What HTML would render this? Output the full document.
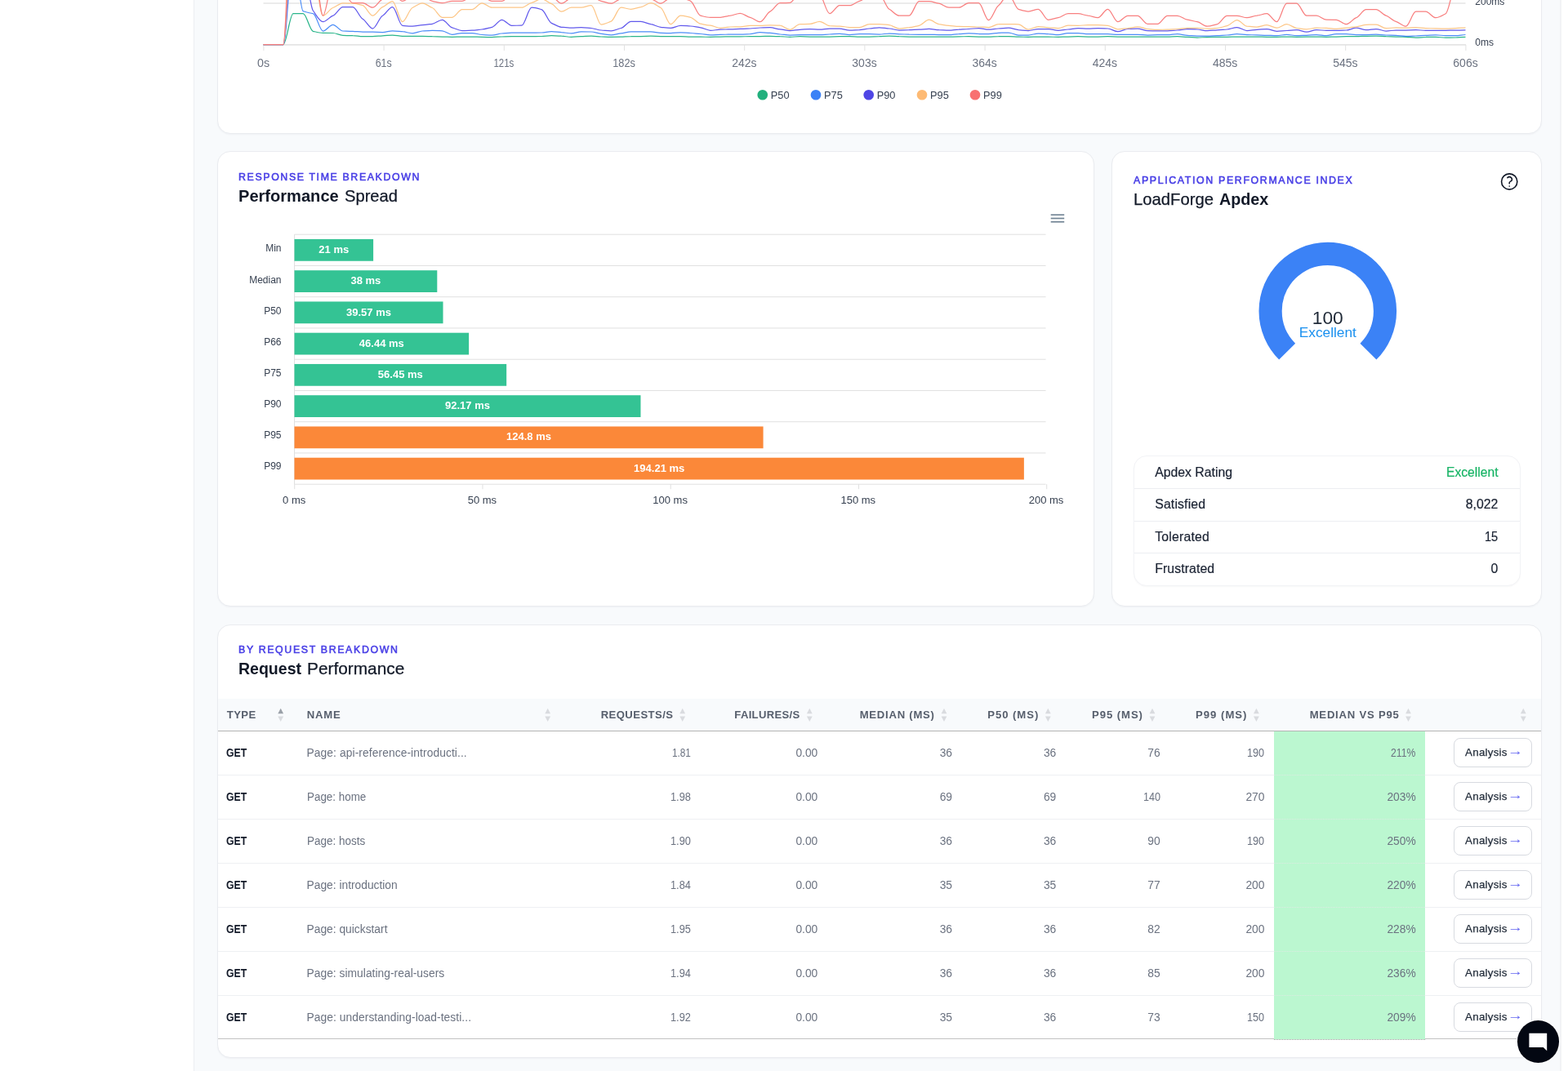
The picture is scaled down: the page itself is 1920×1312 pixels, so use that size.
<!DOCTYPE html>
<html lang="en">
<head>
<meta charset="utf-8">
<title>LoadForge - Run Report</title>
<style>
*{box-sizing:border-box;margin:0;padding:0}
html,body{width:1920px;height:1312px;overflow:hidden;background:#fff}
body{position:relative;font-family:"Liberation Sans",sans-serif;color:#111827}
.abs{position:absolute}
.t{position:absolute;white-space:nowrap;display:block}
.main{position:absolute;left:237px;top:0;width:1675px;height:1312px;background:#f8fafc;border-left:1px solid #eceef2;border-right:2px solid #f2f3f5}
.card{position:absolute;background:#fff;border:1px solid #eaecf0;border-radius:16px;box-shadow:0 1px 2px rgba(16,24,40,.04)}
svg{position:absolute;overflow:visible}
</style>
</head>
<body>
<div id="page" style="position:absolute;left:0;top:0;width:1920px;height:1312px;will-change:transform">
<div class="main"></div>
<div class="card" style="left:266px;top:-40px;width:1622px;height:204px"></div>
<div class="card" style="left:266px;top:185px;width:1074px;height:558px"></div>
<div class="card" style="left:1361px;top:185px;width:527px;height:558px"></div>
<div class="card" style="left:266px;top:765px;width:1622px;height:531px"></div>
<svg style="left:0;top:0" width="1920" height="170" viewBox="0 0 1920 170"><line x1="322.5" y1="3.9" x2="1794.5" y2="3.9" stroke="#e5e5e5" stroke-width="1.5"/><line x1="322" y1="54.9" x2="1795" y2="54.9" stroke="#e5e5e5" stroke-width="1.6"/><line x1="322.90" y1="55" x2="322.90" y2="62" stroke="#e2e2e2" stroke-width="1"/><line x1="470.10" y1="55" x2="470.10" y2="62" stroke="#e2e2e2" stroke-width="1"/><line x1="617.30" y1="55" x2="617.30" y2="62" stroke="#e2e2e2" stroke-width="1"/><line x1="764.50" y1="55" x2="764.50" y2="62" stroke="#e2e2e2" stroke-width="1"/><line x1="911.70" y1="55" x2="911.70" y2="62" stroke="#e2e2e2" stroke-width="1"/><line x1="1058.90" y1="55" x2="1058.90" y2="62" stroke="#e2e2e2" stroke-width="1"/><line x1="1206.10" y1="55" x2="1206.10" y2="62" stroke="#e2e2e2" stroke-width="1"/><line x1="1353.30" y1="55" x2="1353.30" y2="62" stroke="#e2e2e2" stroke-width="1"/><line x1="1500.50" y1="55" x2="1500.50" y2="62" stroke="#e2e2e2" stroke-width="1"/><line x1="1647.70" y1="55" x2="1647.70" y2="62" stroke="#e2e2e2" stroke-width="1"/><line x1="1794.90" y1="55" x2="1794.90" y2="62" stroke="#e2e2e2" stroke-width="1"/><path d="M322.5 54.5C326.6 54.5 330.6 54.5 334.7 54.5C338.7 54.5 342.8 54.5 346.8 54.5C350.9 54.5 354.9 16.7 359.0 16.7C363.1 16.7 367.1 16.7 371.2 16.7C375.2 16.7 379.3 37.4 383.3 38.3C387.4 39.2 391.4 40.3 395.5 40.3C399.5 40.4 403.6 40.4 407.7 40.5C411.7 40.6 415.8 43.2 419.8 43.3C423.9 43.5 427.9 43.6 432.0 43.7C436.0 43.7 440.1 44.7 444.2 44.7C448.2 44.7 452.3 44.7 456.3 44.7C460.4 44.7 464.4 44.0 468.5 43.8C472.5 43.7 476.6 43.0 480.6 43.0C484.7 43.0 488.8 44.3 492.8 44.3C496.9 44.3 500.9 44.3 505.0 44.3C509.0 44.3 513.1 44.3 517.1 44.3C521.2 44.3 525.3 44.6 529.3 44.7C533.4 44.7 537.4 45.0 541.5 45.0C545.5 45.0 549.6 45.3 553.6 45.3C557.7 45.3 561.8 45.0 565.8 45.0C569.9 45.0 573.9 45.0 578.0 45.0C582.0 45.0 586.1 45.3 590.1 45.3C594.2 45.4 598.2 45.5 602.3 45.5C606.4 45.5 610.4 45.1 614.5 45.0C618.5 44.9 622.6 44.7 626.6 44.7C630.7 44.7 634.7 44.7 638.8 44.7C642.9 44.7 646.9 44.7 651.0 44.7C655.0 44.7 659.1 44.6 663.1 44.5C667.2 44.4 671.2 43.7 675.3 43.7C679.3 43.7 683.4 44.0 687.5 44.2C691.5 44.3 695.6 45.3 699.6 45.3C703.7 45.3 707.7 44.8 711.8 44.7C715.8 44.6 719.9 44.2 724.0 44.2C728.0 44.2 732.1 44.9 736.1 45.0C740.2 45.1 744.2 45.3 748.3 45.3C752.3 45.3 756.4 45.2 760.5 45.2C764.5 45.1 768.6 44.7 772.6 44.7C776.7 44.6 780.7 44.5 784.8 44.5C788.8 44.5 792.9 44.2 796.9 44.2C801.0 44.2 805.1 44.5 809.1 44.5C813.2 44.5 817.2 44.5 821.3 44.5C825.3 44.5 829.4 44.5 833.4 44.5C837.5 44.5 841.6 45.0 845.6 45.0C849.7 45.0 853.7 45.1 857.8 45.2C861.8 45.2 865.9 45.3 869.9 45.3C874.0 45.3 878.0 45.0 882.1 45.0C886.2 45.0 890.2 44.8 894.3 44.8C898.3 44.8 902.4 44.8 906.4 44.8C910.5 44.8 914.5 44.7 918.6 44.7C922.7 44.6 926.7 44.5 930.8 44.5C934.8 44.5 938.9 44.3 942.9 44.3C947.0 44.3 951.0 44.6 955.1 44.7C959.2 44.7 963.2 45.3 967.3 45.3C971.3 45.3 975.4 44.7 979.4 44.7C983.5 44.7 987.5 45.0 991.6 45.0C995.6 45.0 999.7 45.2 1003.8 45.2C1007.8 45.2 1011.9 45.0 1015.9 45.0C1020.0 45.0 1024.0 44.7 1028.1 44.7C1032.1 44.7 1036.2 44.7 1040.3 44.7C1044.3 44.7 1048.4 45.2 1052.4 45.2C1056.5 45.2 1060.5 45.0 1064.6 45.0C1068.6 45.0 1072.7 44.7 1076.7 44.7C1080.8 44.6 1084.9 44.2 1088.9 44.2C1093.0 44.2 1097.0 44.6 1101.1 44.7C1105.1 44.7 1109.2 45.0 1113.2 45.0C1117.3 45.0 1121.4 45.0 1125.4 45.0C1129.5 45.0 1133.5 45.2 1137.6 45.2C1141.6 45.2 1145.7 45.0 1149.7 45.0C1153.8 45.0 1157.8 45.0 1161.9 45.0C1166.0 45.0 1170.0 44.9 1174.1 44.8C1178.1 44.8 1182.2 44.7 1186.2 44.7C1190.3 44.7 1194.3 45.0 1198.4 45.0C1202.5 45.0 1206.5 45.2 1210.6 45.2C1214.6 45.2 1218.7 44.7 1222.7 44.7C1226.8 44.6 1230.8 44.5 1234.9 44.5C1239.0 44.5 1243.0 45.1 1247.1 45.2C1251.1 45.2 1255.2 45.3 1259.2 45.3C1263.3 45.3 1267.3 45.0 1271.4 45.0C1275.4 45.0 1279.5 45.1 1283.6 45.2C1287.6 45.2 1291.7 45.3 1295.7 45.3C1299.8 45.3 1303.8 45.0 1307.9 45.0C1311.9 45.0 1316.0 44.7 1320.1 44.7C1324.1 44.7 1328.2 45.0 1332.2 45.0C1336.3 45.0 1340.3 45.0 1344.4 45.0C1348.4 45.0 1352.5 44.7 1356.5 44.7C1360.6 44.7 1364.7 45.0 1368.7 45.0C1372.8 45.0 1376.8 45.2 1380.9 45.2C1384.9 45.2 1389.0 45.0 1393.0 45.0C1397.1 45.0 1401.2 45.2 1405.2 45.2C1409.3 45.2 1413.3 45.2 1417.4 45.2C1421.4 45.2 1425.5 45.2 1429.5 45.2C1433.6 45.2 1437.7 44.7 1441.7 44.7C1445.8 44.7 1449.8 45.2 1453.9 45.3C1457.9 45.4 1462.0 46.0 1466.0 46.0C1470.1 46.0 1474.1 45.5 1478.2 45.5C1482.3 45.5 1486.3 45.3 1490.4 45.3C1494.4 45.3 1498.5 45.3 1502.5 45.3C1506.6 45.3 1510.6 45.0 1514.7 45.0C1518.8 45.0 1522.8 45.0 1526.9 45.0C1530.9 45.0 1535.0 45.0 1539.0 45.0C1543.1 45.0 1547.1 45.3 1551.2 45.3C1555.2 45.3 1559.3 45.3 1563.4 45.3C1567.4 45.3 1571.5 45.0 1575.5 45.0C1579.6 45.0 1583.6 45.3 1587.7 45.3C1591.7 45.3 1595.8 45.2 1599.9 45.2C1603.9 45.1 1608.0 45.0 1612.0 45.0C1616.1 45.0 1620.1 45.3 1624.2 45.3C1628.2 45.3 1632.3 45.0 1636.4 45.0C1640.4 45.0 1644.5 44.7 1648.5 44.7C1652.6 44.7 1656.6 44.7 1660.7 44.7C1664.7 44.7 1668.8 44.4 1672.8 44.3C1676.9 44.3 1681.0 44.2 1685.0 44.2C1689.1 44.2 1693.1 44.6 1697.2 44.7C1701.2 44.7 1705.3 45.0 1709.3 45.0C1713.4 45.0 1717.5 45.2 1721.5 45.3C1725.6 45.4 1729.6 46.2 1733.7 46.2C1737.7 46.2 1741.8 45.6 1745.8 45.5C1749.9 45.4 1753.9 45.3 1758.0 45.3C1762.1 45.3 1766.1 46.2 1770.2 46.2C1774.2 46.2 1778.3 46.1 1782.3 46.0C1786.4 45.9 1790.4 45.4 1794.5 45.3" fill="none" stroke="#2ab58a" stroke-width="1.25" stroke-linejoin="round"/><path d="M322.5 54.5C326.6 54.5 330.6 54.5 334.7 54.5C338.7 54.5 342.8 54.5 346.8 54.5C350.9 54.5 354.9 -55.0 359.0 -55.0C363.1 -55.0 367.1 12.4 371.2 13.7C375.2 14.9 379.3 16.2 383.3 16.7C387.4 17.1 391.4 38.0 395.5 38.0C399.5 38.0 403.6 30.3 407.7 30.3C411.7 30.3 415.8 37.9 419.8 38.0C423.9 38.1 427.9 38.3 432.0 38.3C436.0 38.4 440.1 39.2 444.2 39.2C448.2 39.2 452.3 39.2 456.3 39.2C460.4 39.2 464.4 39.5 468.5 39.5C472.5 39.5 476.6 37.8 480.6 37.8C484.7 37.8 488.8 38.4 492.8 38.7C496.9 38.9 500.9 40.8 505.0 40.8C509.0 40.8 513.1 38.3 517.1 38.0C521.2 37.7 525.3 37.3 529.3 37.3C533.4 37.3 537.4 37.6 541.5 37.8C545.5 38.1 549.6 42.3 553.6 42.3C557.7 42.3 561.8 40.5 565.8 40.5C569.9 40.5 573.9 40.5 578.0 40.5C582.0 40.5 586.1 42.3 590.1 42.5C594.2 42.7 598.2 43.2 602.3 43.2C606.4 43.2 610.4 41.2 614.5 41.0C618.5 40.8 622.6 40.0 626.6 40.0C630.7 40.0 634.7 40.0 638.8 40.0C642.9 40.0 646.9 40.2 651.0 40.2C655.0 40.2 659.1 40.1 663.1 40.0C667.2 39.9 671.2 38.7 675.3 38.7C679.3 38.7 683.4 39.5 687.5 39.7C691.5 39.8 695.6 40.8 699.6 40.8C703.7 40.8 707.7 38.8 711.8 38.8C715.8 38.8 719.9 38.9 724.0 39.0C728.0 39.1 732.1 41.0 736.1 41.3C740.2 41.6 744.2 42.8 748.3 42.8C752.3 42.8 756.4 41.1 760.5 40.8C764.5 40.5 768.6 38.8 772.6 38.8C776.7 38.8 780.7 38.8 784.8 38.8C788.8 38.8 792.9 38.8 796.9 38.8C801.0 38.8 805.1 40.3 809.1 40.3C813.2 40.4 817.2 40.5 821.3 40.5C825.3 40.5 829.4 39.8 833.4 39.8C837.5 39.8 841.6 40.4 845.6 40.5C849.7 40.6 853.7 41.3 857.8 41.5C861.8 41.7 865.9 42.8 869.9 42.8C874.0 42.8 878.0 42.4 882.1 42.3C886.2 42.3 890.2 42.2 894.3 42.2C898.3 42.1 902.4 42.0 906.4 42.0C910.5 42.0 914.5 41.8 918.6 41.7C922.7 41.5 926.7 39.7 930.8 39.7C934.8 39.7 938.9 40.2 942.9 40.3C947.0 40.5 951.0 41.8 955.1 42.0C959.2 42.2 963.2 43.0 967.3 43.0C971.3 43.0 975.4 42.7 979.4 42.7C983.5 42.7 987.5 42.7 991.6 42.7C995.6 42.7 999.7 42.7 1003.8 42.7C1007.8 42.7 1011.9 42.1 1015.9 42.0C1020.0 41.9 1024.0 41.3 1028.1 41.3C1032.1 41.3 1036.2 42.5 1040.3 42.5C1044.3 42.5 1048.4 41.7 1052.4 41.7C1056.5 41.7 1060.5 41.7 1064.6 41.7C1068.6 41.7 1072.7 42.0 1076.7 42.0C1080.8 42.0 1084.9 41.0 1088.9 41.0C1093.0 41.0 1097.0 41.7 1101.1 41.8C1105.1 41.9 1109.2 42.1 1113.2 42.2C1117.3 42.2 1121.4 42.3 1125.4 42.3C1129.5 42.3 1133.5 42.3 1137.6 42.3C1141.6 42.3 1145.7 42.5 1149.7 42.5C1153.8 42.5 1157.8 42.7 1161.9 42.7C1166.0 42.7 1170.0 41.8 1174.1 41.7C1178.1 41.5 1182.2 40.8 1186.2 40.8C1190.3 40.8 1194.3 41.4 1198.4 41.5C1202.5 41.6 1206.5 41.7 1210.6 41.7C1214.6 41.7 1218.7 40.5 1222.7 40.3C1226.8 40.2 1230.8 40.0 1234.9 40.0C1239.0 40.0 1243.0 43.0 1247.1 43.0C1251.1 43.0 1255.2 43.0 1259.2 43.0C1263.3 43.0 1267.3 41.0 1271.4 41.0C1275.4 41.0 1279.5 41.5 1283.6 41.7C1287.6 41.8 1291.7 42.7 1295.7 42.7C1299.8 42.7 1303.8 40.5 1307.9 40.5C1311.9 40.5 1316.0 40.5 1320.1 40.5C1324.1 40.5 1328.2 41.7 1332.2 41.7C1336.3 41.7 1340.3 41.7 1344.4 41.7C1348.4 41.7 1352.5 41.7 1356.5 41.7C1360.6 41.7 1364.7 42.3 1368.7 42.3C1372.8 42.3 1376.8 42.3 1380.9 42.3C1384.9 42.3 1389.0 42.3 1393.0 42.3C1397.1 42.3 1401.2 43.0 1405.2 43.0C1409.3 43.0 1413.3 42.7 1417.4 42.7C1421.4 42.7 1425.5 42.7 1429.5 42.7C1433.6 42.7 1437.7 41.7 1441.7 41.7C1445.8 41.7 1449.8 43.1 1453.9 43.3C1457.9 43.5 1462.0 44.2 1466.0 44.2C1470.1 44.2 1474.1 44.2 1478.2 44.2C1482.3 44.2 1486.3 43.8 1490.4 43.7C1494.4 43.6 1498.5 43.1 1502.5 43.0C1506.6 42.9 1510.6 41.7 1514.7 41.7C1518.8 41.7 1522.8 42.6 1526.9 42.7C1530.9 42.7 1535.0 42.8 1539.0 42.8C1543.1 42.9 1547.1 43.3 1551.2 43.3C1555.2 43.4 1559.3 43.7 1563.4 43.7C1567.4 43.7 1571.5 42.3 1575.5 42.3C1579.6 42.3 1583.6 43.7 1587.7 43.7C1591.7 43.7 1595.8 43.4 1599.9 43.3C1603.9 43.2 1608.0 42.5 1612.0 42.5C1616.1 42.5 1620.1 43.7 1624.2 43.7C1628.2 43.7 1632.3 41.7 1636.4 41.7C1640.4 41.7 1644.5 41.7 1648.5 41.7C1652.6 41.7 1656.6 42.5 1660.7 42.5C1664.7 42.5 1668.8 42.5 1672.8 42.5C1676.9 42.5 1681.0 42.2 1685.0 42.2C1689.1 42.2 1693.1 42.9 1697.2 43.0C1701.2 43.1 1705.3 43.2 1709.3 43.3C1713.4 43.4 1717.5 44.3 1721.5 44.3C1725.6 44.3 1729.6 44.1 1733.7 44.0C1737.7 43.9 1741.8 43.4 1745.8 43.3C1749.9 43.2 1753.9 42.8 1758.0 42.8C1762.1 42.8 1766.1 43.7 1770.2 43.7C1774.2 43.7 1778.3 43.7 1782.3 43.7C1786.4 43.7 1790.4 42.7 1794.5 42.5" fill="none" stroke="#4a8cf7" stroke-width="1.25" stroke-linejoin="round"/><path d="M322.5 54.5C326.6 54.5 330.6 54.5 334.7 54.5C338.7 54.5 342.8 54.5 346.8 54.5C350.9 54.5 354.9 -83.3 359.0 -83.3C363.1 -83.3 367.1 -53.4 371.2 -46.2C375.2 -38.9 379.3 7.5 383.3 13.0C387.4 18.5 391.4 26.7 395.5 26.7C399.5 26.7 403.6 20.5 407.7 19.2C411.7 17.8 415.8 8.7 419.8 8.7C423.9 8.7 427.9 8.7 432.0 8.7C436.0 8.7 440.1 21.4 444.2 23.3C448.2 25.3 452.3 35.0 456.3 35.0C460.4 35.0 464.4 21.1 468.5 19.2C472.5 17.2 476.6 8.7 480.6 8.7C484.7 8.7 488.8 31.0 492.8 31.3C496.9 31.7 500.9 32.2 505.0 32.2C509.0 32.2 513.1 30.9 517.1 30.7C521.2 30.5 525.3 29.8 529.3 29.3C533.4 28.9 537.4 24.3 541.5 24.3C545.5 24.3 549.6 32.8 553.6 33.8C557.7 34.8 561.8 37.5 565.8 37.5C569.9 37.5 573.9 37.3 578.0 37.2C582.0 37.1 586.1 36.3 590.1 36.0C594.2 35.7 598.2 34.2 602.3 33.3C606.4 32.5 610.4 24.3 614.5 24.3C618.5 24.3 622.6 31.3 626.6 31.3C630.7 31.3 634.7 31.2 638.8 31.2C642.9 31.1 646.9 9.2 651.0 9.2C655.0 9.2 659.1 10.5 663.1 11.7C667.2 12.8 671.2 26.7 675.3 28.3C679.3 30.0 683.4 33.0 687.5 33.3C691.5 33.7 695.6 34.2 699.6 34.2C703.7 34.2 707.7 33.5 711.8 33.5C715.8 33.5 719.9 34.2 724.0 34.5C728.0 34.8 732.1 36.8 736.1 37.0C740.2 37.2 744.2 37.8 748.3 37.8C752.3 37.8 756.4 35.4 760.5 34.5C764.5 33.6 768.6 26.3 772.6 26.3C776.7 26.3 780.7 26.3 784.8 26.3C788.8 26.3 792.9 29.1 796.9 29.7C801.0 30.2 805.1 33.0 809.1 33.3C813.2 33.7 817.2 34.3 821.3 34.3C825.3 34.3 829.4 31.3 833.4 31.3C837.5 31.3 841.6 31.8 845.6 32.0C849.7 32.2 853.7 33.4 857.8 33.8C861.8 34.2 865.9 37.3 869.9 37.3C874.0 37.3 878.0 36.3 882.1 36.2C886.2 36.1 890.2 35.9 894.3 35.8C898.3 35.8 902.4 35.4 906.4 35.3C910.5 35.3 914.5 35.1 918.6 35.0C922.7 34.9 926.7 34.1 930.8 34.0C934.8 33.9 938.9 33.7 942.9 33.7C947.0 33.7 951.0 35.5 955.1 35.8C959.2 36.1 963.2 37.7 967.3 37.7C971.3 37.7 975.4 36.5 979.4 36.3C983.5 36.2 987.5 35.5 991.6 35.5C995.6 35.5 999.7 36.2 1003.8 36.2C1007.8 36.2 1011.9 35.0 1015.9 35.0C1020.0 35.0 1024.0 35.0 1028.1 35.0C1032.1 35.0 1036.2 37.2 1040.3 37.2C1044.3 37.2 1048.4 36.8 1052.4 36.7C1056.5 36.5 1060.5 35.2 1064.6 35.0C1068.6 34.8 1072.7 33.8 1076.7 33.8C1080.8 33.8 1084.9 34.8 1088.9 35.0C1093.0 35.2 1097.0 37.0 1101.1 37.0C1105.1 37.0 1109.2 36.7 1113.2 36.7C1117.3 36.6 1121.4 36.3 1125.4 36.2C1129.5 36.1 1133.5 35.3 1137.6 35.3C1141.6 35.3 1145.7 36.5 1149.7 36.7C1153.8 36.8 1157.8 37.2 1161.9 37.2C1166.0 37.2 1170.0 36.3 1174.1 36.2C1178.1 36.0 1182.2 35.6 1186.2 35.5C1190.3 35.4 1194.3 34.5 1198.4 34.5C1202.5 34.5 1206.5 36.2 1210.6 36.2C1214.6 36.2 1218.7 35.1 1222.7 35.0C1226.8 34.9 1230.8 34.2 1234.9 34.2C1239.0 34.2 1243.0 36.4 1247.1 36.7C1251.1 36.9 1255.2 37.5 1259.2 37.5C1263.3 37.5 1267.3 35.5 1271.4 35.5C1275.4 35.5 1279.5 35.5 1283.6 35.5C1287.6 35.5 1291.7 37.3 1295.7 37.3C1299.8 37.3 1303.8 36.2 1307.9 36.0C1311.9 35.8 1316.0 34.5 1320.1 34.5C1324.1 34.5 1328.2 35.2 1332.2 35.2C1336.3 35.2 1340.3 34.7 1344.4 34.7C1348.4 34.7 1352.5 34.9 1356.5 35.0C1360.6 35.1 1364.7 38.7 1368.7 38.7C1372.8 38.7 1376.8 35.6 1380.9 35.5C1384.9 35.4 1389.0 35.2 1393.0 35.2C1397.1 35.2 1401.2 37.6 1405.2 37.7C1409.3 37.7 1413.3 37.8 1417.4 37.8C1421.4 37.8 1425.5 37.8 1429.5 37.8C1433.6 37.8 1437.7 37.2 1441.7 37.0C1445.8 36.8 1449.8 35.5 1453.9 35.5C1457.9 35.5 1462.0 35.8 1466.0 36.0C1470.1 36.2 1474.1 37.7 1478.2 37.7C1482.3 37.7 1486.3 37.0 1490.4 36.8C1494.4 36.7 1498.5 36.2 1502.5 36.0C1506.6 35.8 1510.6 33.5 1514.7 33.5C1518.8 33.5 1522.8 37.5 1526.9 37.5C1530.9 37.5 1535.0 36.5 1539.0 36.3C1543.1 36.2 1547.1 35.5 1551.2 35.5C1555.2 35.5 1559.3 38.3 1563.4 38.3C1567.4 38.3 1571.5 37.6 1575.5 37.5C1579.6 37.4 1583.6 36.7 1587.7 36.7C1591.7 36.7 1595.8 39.2 1599.9 39.2C1603.9 39.2 1608.0 36.7 1612.0 36.7C1616.1 36.7 1620.1 37.3 1624.2 37.3C1628.2 37.3 1632.3 37.3 1636.4 37.3C1640.4 37.3 1644.5 37.1 1648.5 37.0C1652.6 36.9 1656.6 34.2 1660.7 34.2C1664.7 34.2 1668.8 36.7 1672.8 36.7C1676.9 36.7 1681.0 35.5 1685.0 35.5C1689.1 35.5 1693.1 38.0 1697.2 38.0C1701.2 38.0 1705.3 37.0 1709.3 37.0C1713.4 37.0 1717.5 37.0 1721.5 37.0C1725.6 37.0 1729.6 36.7 1733.7 36.7C1737.7 36.7 1741.8 37.3 1745.8 37.3C1749.9 37.3 1753.9 37.3 1758.0 37.3C1762.1 37.3 1766.1 37.3 1770.2 37.3C1774.2 37.3 1778.3 37.0 1782.3 37.0C1786.4 37.0 1790.4 36.9 1794.5 36.8" fill="none" stroke="#6159ec" stroke-width="1.25" stroke-linejoin="round"/><path d="M322.5 54.5C326.6 54.5 330.6 54.5 334.7 54.5C338.7 54.5 342.8 54.5 346.8 54.5C350.9 54.5 354.9 -116.7 359.0 -116.7C363.1 -116.7 367.1 -89.0 371.2 -83.3C375.2 -77.7 379.3 -49.4 383.3 -41.7C387.4 -34.0 391.4 19.2 395.5 19.2C399.5 19.2 403.6 10.6 407.7 9.5C411.7 8.3 415.8 3.8 419.8 3.8C423.9 3.8 427.9 4.0 432.0 4.2C436.0 4.3 440.1 5.6 444.2 6.7C448.2 7.8 452.3 19.2 456.3 19.2C460.4 19.2 464.4 10.0 468.5 8.7C472.5 7.4 476.6 1.7 480.6 1.7C484.7 1.7 488.8 26.7 492.8 26.7C496.9 26.7 500.9 11.2 505.0 9.5C509.0 7.8 513.1 3.8 517.1 3.8C521.2 3.8 525.3 8.2 529.3 9.5C533.4 10.8 537.4 21.3 541.5 21.3C545.5 21.3 549.6 21.3 553.6 21.3C557.7 21.3 561.8 11.7 565.8 11.7C569.9 11.7 573.9 11.7 578.0 11.7C582.0 11.7 586.1 3.8 590.1 3.8C594.2 3.8 598.2 9.2 602.3 9.2C606.4 9.2 610.4 9.2 614.5 9.2C618.5 9.2 622.6 9.2 626.6 9.2C630.7 9.2 634.7 9.2 638.8 9.2C642.9 9.2 646.9 4.1 651.0 3.3C655.0 2.5 659.1 -1.3 663.1 -1.3C667.2 -1.3 671.2 3.5 675.3 4.7C679.3 5.8 683.4 14.2 687.5 14.2C691.5 14.2 695.6 9.2 699.6 9.2C703.7 9.2 707.7 9.2 711.8 9.2C715.8 9.2 719.9 6.7 724.0 6.7C728.0 6.7 732.1 30.0 736.1 30.0C740.2 30.0 744.2 27.7 748.3 26.2C752.3 24.6 756.4 9.2 760.5 9.2C764.5 9.2 768.6 11.3 772.6 11.3C776.7 11.3 780.7 9.2 784.8 8.7C788.8 8.1 792.9 3.7 796.9 3.7C801.0 3.7 805.1 7.5 809.1 9.5C813.2 11.4 817.2 29.7 821.3 29.7C825.3 29.7 829.4 19.2 833.4 19.2C837.5 19.2 841.6 20.6 845.6 21.3C849.7 22.1 853.7 28.4 857.8 29.2C861.8 29.9 865.9 30.8 869.9 31.2C874.0 31.6 878.0 34.3 882.1 34.3C886.2 34.3 890.2 33.1 894.3 33.0C898.3 32.9 902.4 32.9 906.4 32.8C910.5 32.8 914.5 31.3 918.6 31.3C922.7 31.3 926.7 31.3 930.8 31.3C934.8 31.3 938.9 30.8 942.9 30.8C947.0 30.8 951.0 31.0 955.1 31.2C959.2 31.3 963.2 36.3 967.3 36.3C971.3 36.3 975.4 29.8 979.4 29.7C983.5 29.5 987.5 29.4 991.6 29.3C995.6 29.3 999.7 26.3 1003.8 26.3C1007.8 26.3 1011.9 31.5 1015.9 31.7C1020.0 31.8 1024.0 32.0 1028.1 32.0C1032.1 32.0 1036.2 33.5 1040.3 33.5C1044.3 33.5 1048.4 33.5 1052.4 33.5C1056.5 33.5 1060.5 29.7 1064.6 29.7C1068.6 29.6 1072.7 29.5 1076.7 29.5C1080.8 29.5 1084.9 30.3 1088.9 30.7C1093.0 31.1 1097.0 35.0 1101.1 35.0C1105.1 35.0 1109.2 33.9 1113.2 33.7C1117.3 33.4 1121.4 32.0 1125.4 31.3C1129.5 30.6 1133.5 24.2 1137.6 24.2C1141.6 24.2 1145.7 29.1 1149.7 29.7C1153.8 30.2 1157.8 31.1 1161.9 31.3C1166.0 31.5 1170.0 32.3 1174.1 32.3C1178.1 32.4 1182.2 32.5 1186.2 32.5C1190.3 32.5 1194.3 32.9 1198.4 33.0C1202.5 33.1 1206.5 33.5 1210.6 33.5C1214.6 33.5 1218.7 29.7 1222.7 29.7C1226.8 29.6 1230.8 29.5 1234.9 29.5C1239.0 29.5 1243.0 29.7 1247.1 29.8C1251.1 30.0 1255.2 36.0 1259.2 36.0C1263.3 36.0 1267.3 32.5 1271.4 32.5C1275.4 32.5 1279.5 33.7 1283.6 33.8C1287.6 34.0 1291.7 34.7 1295.7 34.7C1299.8 34.7 1303.8 31.2 1307.9 31.2C1311.9 31.2 1316.0 31.3 1320.1 31.3C1324.1 31.3 1328.2 30.7 1332.2 30.7C1336.3 30.7 1340.3 30.7 1344.4 30.7C1348.4 30.7 1352.5 31.0 1356.5 31.3C1360.6 31.6 1364.7 35.8 1368.7 35.8C1372.8 35.8 1376.8 34.9 1380.9 34.7C1384.9 34.4 1389.0 32.8 1393.0 32.8C1397.1 32.8 1401.2 35.2 1405.2 35.5C1409.3 35.8 1413.3 36.3 1417.4 36.3C1421.4 36.3 1425.5 36.2 1429.5 36.2C1433.6 36.1 1437.7 35.6 1441.7 35.5C1445.8 35.4 1449.8 34.3 1453.9 34.3C1457.9 34.3 1462.0 34.3 1466.0 34.3C1470.1 34.3 1474.1 35.2 1478.2 35.2C1482.3 35.2 1486.3 34.8 1490.4 34.5C1494.4 34.2 1498.5 32.4 1502.5 31.7C1506.6 30.9 1510.6 24.5 1514.7 24.5C1518.8 24.5 1522.8 31.8 1526.9 32.2C1530.9 32.5 1535.0 33.0 1539.0 33.0C1543.1 33.0 1547.1 30.7 1551.2 30.7C1555.2 30.7 1559.3 34.2 1563.4 34.2C1567.4 34.2 1571.5 29.7 1575.5 29.7C1579.6 29.7 1583.6 34.0 1587.7 34.5C1591.7 35.0 1595.8 35.8 1599.9 35.8C1603.9 35.8 1608.0 34.2 1612.0 34.2C1616.1 34.2 1620.1 34.3 1624.2 34.3C1628.2 34.4 1632.3 35.3 1636.4 35.3C1640.4 35.3 1644.5 34.4 1648.5 34.2C1652.6 34.0 1656.6 33.1 1660.7 32.8C1664.7 32.5 1668.8 30.5 1672.8 30.3C1676.9 30.2 1681.0 30.0 1685.0 30.0C1689.1 30.0 1693.1 34.7 1697.2 34.7C1701.2 34.7 1705.3 33.8 1709.3 33.8C1713.4 33.8 1717.5 34.2 1721.5 34.2C1725.6 34.2 1729.6 33.7 1733.7 33.7C1737.7 33.7 1741.8 34.6 1745.8 34.7C1749.9 34.7 1753.9 34.8 1758.0 34.8C1762.1 34.9 1766.1 35.0 1770.2 35.0C1774.2 35.0 1778.3 34.8 1782.3 34.7C1786.4 34.6 1790.4 34.0 1794.5 33.8" fill="none" stroke="#fdc687" stroke-width="1.25" stroke-linejoin="round"/><path d="M322.5 54.5C326.6 54.5 330.6 54.5 334.7 54.5C338.7 54.5 342.8 54.5 346.8 54.5C350.9 54.5 354.9 -159.2 359.0 -159.2C363.1 -159.2 367.1 -124.2 371.2 -116.7C375.2 -109.1 379.3 -68.5 383.3 -58.3C387.4 -48.1 391.4 19.2 395.5 19.2C399.5 19.2 403.6 -23.3 407.7 -23.3C411.7 -23.3 415.8 -13.0 419.8 -11.0C423.9 -9.0 427.9 3.7 432.0 3.7C436.0 3.7 440.1 3.7 444.2 3.7C448.2 3.7 452.3 9.2 456.3 9.2C460.4 9.2 464.4 0.4 468.5 -0.8C472.5 -2.0 476.6 -6.7 480.6 -6.7C484.7 -6.7 488.8 1.3 492.8 1.3C496.9 1.3 500.9 -5.0 505.0 -5.0C509.0 -5.0 513.1 -5.0 517.1 -5.0C521.2 -5.0 525.3 0.7 529.3 1.3C533.4 2.0 537.4 3.7 541.5 3.7C545.5 3.7 549.6 1.3 553.6 1.3C557.7 1.3 561.8 1.3 565.8 1.3C569.9 1.3 573.9 -5.0 578.0 -5.0C582.0 -5.0 586.1 -5.0 590.1 -5.0C594.2 -5.0 598.2 1.3 602.3 1.3C606.4 1.3 610.4 1.3 614.5 1.3C618.5 1.3 622.6 -5.8 626.6 -6.7C630.7 -7.5 634.7 -9.5 638.8 -10.0C642.9 -10.5 646.9 -13.3 651.0 -13.3C655.0 -13.3 659.1 -10.6 663.1 -10.0C667.2 -9.4 671.2 -6.1 675.3 -5.0C679.3 -3.9 683.4 4.2 687.5 4.2C691.5 4.2 695.6 -1.7 699.6 -2.5C703.7 -3.3 707.7 -6.7 711.8 -6.7C715.8 -6.7 719.9 -5.6 724.0 -5.0C728.0 -4.4 732.1 0.6 736.1 1.3C740.2 2.0 744.2 4.2 748.3 4.2C752.3 4.2 756.4 -0.9 760.5 -1.7C764.5 -2.5 768.6 -6.7 772.6 -6.7C776.7 -6.7 780.7 -6.7 784.8 -6.7C788.8 -6.7 792.9 -2.5 796.9 -1.7C801.0 -0.9 805.1 4.2 809.1 4.2C813.2 4.2 817.2 -2.5 821.3 -2.5C825.3 -2.5 829.4 -2.5 833.4 -2.5C837.5 -2.5 841.6 -0.3 845.6 1.3C849.7 3.0 853.7 18.2 857.8 19.2C861.8 20.1 865.9 21.3 869.9 21.3C874.0 21.3 878.0 21.3 882.1 21.3C886.2 21.3 890.2 19.5 894.3 19.2C898.3 18.8 902.4 16.3 906.4 16.3C910.5 16.3 914.5 20.6 918.6 21.3C922.7 22.1 926.7 26.7 930.8 26.7C934.8 26.7 938.9 15.9 942.9 14.2C947.0 12.4 951.0 3.8 955.1 3.7C959.2 3.6 963.2 3.5 967.3 3.3C971.3 3.2 975.4 -8.7 979.4 -10.0C983.5 -11.2 987.5 -13.3 991.6 -13.3C995.6 -13.3 999.7 -8.9 1003.8 -6.7C1007.8 -4.4 1011.9 16.7 1015.9 16.7C1020.0 16.7 1024.0 6.7 1028.1 6.7C1032.1 6.7 1036.2 6.7 1040.3 6.7C1044.3 6.7 1048.4 2.2 1052.4 1.3C1056.5 0.5 1060.5 -4.4 1064.6 -5.0C1068.6 -5.6 1072.7 -6.7 1076.7 -6.7C1080.8 -6.7 1084.9 9.4 1088.9 11.3C1093.0 13.3 1097.0 19.2 1101.1 19.2C1105.1 19.2 1109.2 19.2 1113.2 19.2C1117.3 19.2 1121.4 1.7 1125.4 1.7C1129.5 1.7 1133.5 1.7 1137.6 1.7C1141.6 1.7 1145.7 3.6 1149.7 4.2C1153.8 4.7 1157.8 9.2 1161.9 9.2C1166.0 9.2 1170.0 9.2 1174.1 9.2C1178.1 9.2 1182.2 3.7 1186.2 3.7C1190.3 3.7 1194.3 3.7 1198.4 3.7C1202.5 3.7 1206.5 24.7 1210.6 24.7C1214.6 24.7 1218.7 9.0 1222.7 6.7C1226.8 4.3 1230.8 -6.7 1234.9 -6.7C1239.0 -6.7 1243.0 10.1 1247.1 11.3C1251.1 12.5 1255.2 14.0 1259.2 14.0C1263.3 14.0 1267.3 11.3 1271.4 11.3C1275.4 11.3 1279.5 24.3 1283.6 24.3C1287.6 24.3 1291.7 22.2 1295.7 21.7C1299.8 21.1 1303.8 16.7 1307.9 16.7C1311.9 16.7 1316.0 16.7 1320.1 16.7C1324.1 16.7 1328.2 18.8 1332.2 19.2C1336.3 19.5 1340.3 21.7 1344.4 21.7C1348.4 21.7 1352.5 11.3 1356.5 11.3C1360.6 11.3 1364.7 26.7 1368.7 26.7C1372.8 26.7 1376.8 19.3 1380.9 19.3C1384.9 19.3 1389.0 19.3 1393.0 19.3C1397.1 19.3 1401.2 29.3 1405.2 29.3C1409.3 29.3 1413.3 29.3 1417.4 29.3C1421.4 29.3 1425.5 19.3 1429.5 19.3C1433.6 19.3 1437.7 19.3 1441.7 19.3C1445.8 19.3 1449.8 23.6 1453.9 24.2C1457.9 24.7 1462.0 26.1 1466.0 26.7C1470.1 27.3 1474.1 32.2 1478.2 32.2C1482.3 32.2 1486.3 30.6 1490.4 29.7C1494.4 28.7 1498.5 19.3 1502.5 19.3C1506.6 19.3 1510.6 19.3 1514.7 19.3C1518.8 19.3 1522.8 21.7 1526.9 21.7C1530.9 21.7 1535.0 19.5 1539.0 19.2C1543.1 18.8 1547.1 16.7 1551.2 16.7C1555.2 16.7 1559.3 26.7 1563.4 26.7C1567.4 26.7 1571.5 4.2 1575.5 4.2C1579.6 4.2 1583.6 4.2 1587.7 4.2C1591.7 4.2 1595.8 19.2 1599.9 19.2C1603.9 19.2 1608.0 19.2 1612.0 19.2C1616.1 19.2 1620.1 24.1 1624.2 24.2C1628.2 24.2 1632.3 24.3 1636.4 24.3C1640.4 24.4 1644.5 29.7 1648.5 29.7C1652.6 29.7 1656.6 23.0 1660.7 21.7C1664.7 20.3 1668.8 11.7 1672.8 11.7C1676.9 11.7 1681.0 11.7 1685.0 11.7C1689.1 11.7 1693.1 18.1 1697.2 19.2C1701.2 20.3 1705.3 25.4 1709.3 26.3C1713.4 27.3 1717.5 32.2 1721.5 32.2C1725.6 32.2 1729.6 14.2 1733.7 14.2C1737.7 14.2 1741.8 14.2 1745.8 14.2C1749.9 14.2 1753.9 21.7 1758.0 21.7C1762.1 21.7 1766.1 18.9 1770.2 16.7C1774.2 14.4 1778.3 -15.0 1782.3 -20.0C1786.4 -25.0 1790.4 -45.5 1794.5 -50.0" fill="none" stroke="#f87f7f" stroke-width="1.25" stroke-linejoin="round"/><text x="322.50" y="81.6" text-anchor="middle" font-size="14" fill="#6b7280" textLength="15.07" lengthAdjust="spacingAndGlyphs">0s</text><text x="469.70" y="81.6" text-anchor="middle" font-size="14" fill="#6b7280" textLength="19.99" lengthAdjust="spacingAndGlyphs">61s</text><text x="616.90" y="81.6" text-anchor="middle" font-size="14" fill="#6b7280" textLength="24.91" lengthAdjust="spacingAndGlyphs">121s</text><text x="764.10" y="81.6" text-anchor="middle" font-size="14" fill="#6b7280" textLength="27.61" lengthAdjust="spacingAndGlyphs">182s</text><text x="911.30" y="81.6" text-anchor="middle" font-size="14" fill="#6b7280" textLength="30.31" lengthAdjust="spacingAndGlyphs">242s</text><text x="1058.50" y="81.6" text-anchor="middle" font-size="14" fill="#6b7280" textLength="30.31" lengthAdjust="spacingAndGlyphs">303s</text><text x="1205.70" y="81.6" text-anchor="middle" font-size="14" fill="#6b7280" textLength="30.31" lengthAdjust="spacingAndGlyphs">364s</text><text x="1352.90" y="81.6" text-anchor="middle" font-size="14" fill="#6b7280" textLength="30.31" lengthAdjust="spacingAndGlyphs">424s</text><text x="1500.10" y="81.6" text-anchor="middle" font-size="14" fill="#6b7280" textLength="30.31" lengthAdjust="spacingAndGlyphs">485s</text><text x="1647.30" y="81.6" text-anchor="middle" font-size="14" fill="#6b7280" textLength="30.31" lengthAdjust="spacingAndGlyphs">545s</text><text x="1794.50" y="81.6" text-anchor="middle" font-size="14" fill="#6b7280" textLength="30.31" lengthAdjust="spacingAndGlyphs">606s</text><text x="1806.3" y="6.4" font-size="12" fill="#374151">200ms</text><text x="1806.3" y="56" font-size="12" fill="#374151">0ms</text><circle cx="933.75" cy="116.3" r="6.3" fill="#22b07d"/><text x="943.75" y="120.6" font-size="12.8" fill="#374151">P50</text><circle cx="999" cy="116.3" r="6.3" fill="#3b82f6"/><text x="1009" y="120.6" font-size="12.8" fill="#374151">P75</text><circle cx="1063.7" cy="116.3" r="6.3" fill="#4f46e5"/><text x="1073.7" y="120.6" font-size="12.8" fill="#374151">P90</text><circle cx="1129" cy="116.3" r="6.3" fill="#fdba74"/><text x="1139" y="120.6" font-size="12.8" fill="#374151">P95</text><circle cx="1194" cy="116.3" r="6.3" fill="#f87171"/><text x="1204" y="120.6" font-size="12.8" fill="#374151">P99</text></svg>
<span class="t" style="left:292.30px;top:209px;font-size:13.3px;line-height:15px;font-weight:400;color:#4a40e6;letter-spacing:1.734px;transform:scaleX(0.9300);transform-origin:0 0;-webkit-text-stroke:0.6px #4a40e6;">RESPONSE TIME BREAKDOWN</span>
<span class="t" style="left:292.30px;top:228px;font-size:21px;line-height:23px;font-weight:700;color:#111827;transform:scaleX(0.9557);transform-origin:0 0;">Performance</span>
<span class="t" style="left:421.80px;top:228px;font-size:21px;line-height:23px;font-weight:400;color:#111827;transform:scaleX(0.9599);transform-origin:0 0;-webkit-text-stroke:0.25px #111827;">Spread</span>
<svg style="left:0;top:0" width="1920" height="1312" viewBox="0 0 1920 1312"><line x1="360.5" y1="287.20" x2="1280.5" y2="287.20" stroke="#e0e0e0" stroke-width="1"/><line x1="360.5" y1="325.45" x2="1280.5" y2="325.45" stroke="#e0e0e0" stroke-width="1"/><line x1="360.5" y1="363.70" x2="1280.5" y2="363.70" stroke="#e0e0e0" stroke-width="1"/><line x1="360.5" y1="401.95" x2="1280.5" y2="401.95" stroke="#e0e0e0" stroke-width="1"/><line x1="360.5" y1="440.20" x2="1280.5" y2="440.20" stroke="#e0e0e0" stroke-width="1"/><line x1="360.5" y1="478.45" x2="1280.5" y2="478.45" stroke="#e0e0e0" stroke-width="1"/><line x1="360.5" y1="516.70" x2="1280.5" y2="516.70" stroke="#e0e0e0" stroke-width="1"/><line x1="360.5" y1="554.95" x2="1280.5" y2="554.95" stroke="#e0e0e0" stroke-width="1"/><line x1="360.5" y1="593.20" x2="1280.5" y2="593.20" stroke="#e0e0e0" stroke-width="1"/><line x1="360.70" y1="593.20" x2="360.70" y2="599.20" stroke="#e0e0e0" stroke-width="1"/><line x1="590.95" y1="593.20" x2="590.95" y2="599.20" stroke="#e0e0e0" stroke-width="1"/><line x1="821.20" y1="593.20" x2="821.20" y2="599.20" stroke="#e0e0e0" stroke-width="1"/><line x1="1051.45" y1="593.20" x2="1051.45" y2="599.20" stroke="#e0e0e0" stroke-width="1"/><line x1="1281.70" y1="593.20" x2="1281.70" y2="599.20" stroke="#e0e0e0" stroke-width="1"/><line x1="360.5" y1="287.2" x2="360.5" y2="593.2" stroke="#e0e0e0" stroke-width="1"/><rect x="360.5" y="292.95" width="96.60" height="26.8" fill="#34c394"/><text x="408.80" y="310" text-anchor="middle" font-size="13" font-weight="700" fill="#fff">21 ms</text><text x="344.5" y="308" text-anchor="end" font-size="12" fill="#374151">Min</text><rect x="360.5" y="331.20" width="174.80" height="26.8" fill="#34c394"/><text x="447.90" y="348" text-anchor="middle" font-size="13" font-weight="700" fill="#fff">38 ms</text><text x="344.5" y="347" text-anchor="end" font-size="12" fill="#374151">Median</text><rect x="360.5" y="369.45" width="182.02" height="26.8" fill="#34c394"/><text x="451.51" y="387" text-anchor="middle" font-size="13" font-weight="700" fill="#fff">39.57 ms</text><text x="344.5" y="385" text-anchor="end" font-size="12" fill="#374151">P50</text><rect x="360.5" y="407.70" width="213.62" height="26.8" fill="#34c394"/><text x="467.31" y="425" text-anchor="middle" font-size="13" font-weight="700" fill="#fff">46.44 ms</text><text x="344.5" y="423" text-anchor="end" font-size="12" fill="#374151">P66</text><rect x="360.5" y="445.95" width="259.67" height="26.8" fill="#34c394"/><text x="490.34" y="463" text-anchor="middle" font-size="13" font-weight="700" fill="#fff">56.45 ms</text><text x="344.5" y="461" text-anchor="end" font-size="12" fill="#374151">P75</text><rect x="360.5" y="484.20" width="423.98" height="26.8" fill="#34c394"/><text x="572.49" y="501" text-anchor="middle" font-size="13" font-weight="700" fill="#fff">92.17 ms</text><text x="344.5" y="499" text-anchor="end" font-size="12" fill="#374151">P90</text><rect x="360.5" y="522.45" width="574.08" height="26.8" fill="#fb8839"/><text x="647.54" y="539" text-anchor="middle" font-size="13" font-weight="700" fill="#fff">124.8 ms</text><text x="344.5" y="537" text-anchor="end" font-size="12" fill="#374151">P95</text><rect x="360.5" y="560.70" width="893.37" height="26.8" fill="#fb8839"/><text x="807.18" y="578" text-anchor="middle" font-size="13" font-weight="700" fill="#fff">194.21 ms</text><text x="344.5" y="575" text-anchor="end" font-size="12" fill="#374151">P99</text><text x="360.20" y="616.5" text-anchor="middle" font-size="13" fill="#374151">0 ms</text><text x="590.40" y="616.5" text-anchor="middle" font-size="13" fill="#374151">50 ms</text><text x="820.60" y="616.5" text-anchor="middle" font-size="13" fill="#374151">100 ms</text><text x="1050.80" y="616.5" text-anchor="middle" font-size="13" fill="#374151">150 ms</text><text x="1281.00" y="616.5" text-anchor="middle" font-size="13" fill="#374151">200 ms</text><rect x="1286.7" y="262.40" width="16.5" height="1.6" fill="#6e8192"/><rect x="1286.7" y="266.70" width="16.5" height="1.6" fill="#6e8192"/><rect x="1286.7" y="271.00" width="16.5" height="1.6" fill="#6e8192"/></svg>
<span class="t" style="left:1388.00px;top:213px;font-size:13.3px;line-height:15px;font-weight:400;color:#4a40e6;letter-spacing:1.768px;transform:scaleX(0.9300);transform-origin:0 0;-webkit-text-stroke:0.6px #4a40e6;">APPLICATION PERFORMANCE INDEX</span>
<span class="t" style="left:1388.00px;top:232px;font-size:21px;line-height:23px;font-weight:400;color:#111827;transform:scaleX(0.9648);transform-origin:0 0;-webkit-text-stroke:0.25px #111827;">LoadForge</span>
<span class="t" style="left:1492.50px;top:232px;font-size:21px;line-height:23px;font-weight:700;color:#111827;transform:scaleX(0.9396);transform-origin:0 0;">Apdex</span>
<svg style="left:0;top:0" width="1920" height="300" viewBox="0 0 1920 300"><g transform="translate(1848.2 222.45) scale(1.07) translate(-12 -12)" fill="none" stroke="#111827" stroke-width="1.5" stroke-linecap="round" stroke-linejoin="round"><path d="M9.879 7.519c1.171-1.025 3.071-1.025 4.242 0 1.172 1.025 1.172 2.687 0 3.712-.203.179-.43.326-.67.442-.745.361-1.45.999-1.45 1.827v.75M21 12a9 9 0 11-18 0 9 9 0 0118 0zm-9 5.25h.008v.008H12v-.008z"/></g></svg>
<svg style="left:0;top:0" width="1920" height="1312" viewBox="0 0 1920 1312"><path d="M1576.16 430.64 A70.20 70.20 0 1 1 1675.44 430.64" fill="none" stroke="#3b82f6" stroke-width="28.20"/><text x="1625.8" y="396.8" text-anchor="middle" font-size="22.8" fill="#1f2937">100</text><text x="1625.8" y="413.1" text-anchor="middle" font-size="17.3" fill="#1a90ef">Excellent</text></svg>
<div class="abs" style="left:1388px;top:558px;width:474px;height:160px;border-radius:16px;background:#fff;border:1px solid #f2f3f6;box-shadow:0 1px 2px rgba(0,0,0,.03)"></div>
<div class="abs" style="left:1389px;top:598px;width:472px;height:1px;background:#eceef2"></div>
<div class="abs" style="left:1389px;top:638px;width:472px;height:1px;background:#eceef2"></div>
<div class="abs" style="left:1389px;top:677px;width:472px;height:1px;background:#eceef2"></div>
<span class="t" style="left:1414.20px;top:570px;font-size:15.8px;line-height:17px;font-weight:400;color:#1a2232;-webkit-text-stroke:0.2px #1a2232;">Apdex Rating</span>
<span class="t" style="left:1770.80px;top:570px;font-size:15.8px;line-height:17px;font-weight:400;color:#16b364;transform:scaleX(0.9905);transform-origin:0 0;-webkit-text-stroke:0.2px #16b364;">Excellent</span>
<span class="t" style="left:1414.20px;top:609px;font-size:15.8px;line-height:17px;font-weight:400;color:#1a2232;letter-spacing:0.162px;-webkit-text-stroke:0.2px #1a2232;">Satisfied</span>
<span class="t" style="left:1794.76px;top:609px;font-size:15.8px;line-height:17px;font-weight:400;color:#1a2232;-webkit-text-stroke:0.2px #1a2232;">8,022</span>
<span class="t" style="left:1414.20px;top:649px;font-size:15.8px;line-height:17px;font-weight:400;color:#1a2232;letter-spacing:0.200px;-webkit-text-stroke:0.2px #1a2232;">Tolerated</span>
<span class="t" style="left:1818.10px;top:649px;font-size:15.8px;line-height:17px;font-weight:400;color:#1a2232;transform:scaleX(0.9218);transform-origin:0 0;-webkit-text-stroke:0.2px #1a2232;">15</span>
<span class="t" style="left:1414.20px;top:688px;font-size:15.8px;line-height:17px;font-weight:400;color:#1a2232;letter-spacing:0.100px;-webkit-text-stroke:0.2px #1a2232;">Frustrated</span>
<span class="t" style="left:1825.51px;top:688px;font-size:15.8px;line-height:17px;font-weight:400;color:#1a2232;-webkit-text-stroke:0.2px #1a2232;">0</span>
<span class="t" style="left:292.30px;top:788px;font-size:13.3px;line-height:15px;font-weight:400;color:#4a40e6;letter-spacing:1.765px;transform:scaleX(0.9300);transform-origin:0 0;-webkit-text-stroke:0.6px #4a40e6;">BY REQUEST BREAKDOWN</span>
<span class="t" style="left:292.30px;top:807px;font-size:21px;line-height:23px;font-weight:700;color:#111827;transform:scaleX(0.9294);transform-origin:0 0;">Request</span>
<span class="t" style="left:375.70px;top:807px;font-size:21px;line-height:23px;font-weight:400;color:#111827;transform:scaleX(0.9924);transform-origin:0 0;-webkit-text-stroke:0.25px #111827;">Performance</span>
<div class="abs" style="left:267px;top:856px;width:1620px;height:39px;background:#f8fafc"></div>
<div class="abs" style="left:267px;top:895px;width:1620px;height:1px;background:#b4b4b4"></div>
<div class="abs" style="left:267px;top:949px;width:1620px;height:1px;background:#eef0f3"></div>
<div class="abs" style="left:267px;top:1003px;width:1620px;height:1px;background:#eef0f3"></div>
<div class="abs" style="left:267px;top:1057px;width:1620px;height:1px;background:#eef0f3"></div>
<div class="abs" style="left:267px;top:1111px;width:1620px;height:1px;background:#eef0f3"></div>
<div class="abs" style="left:267px;top:1165px;width:1620px;height:1px;background:#eef0f3"></div>
<div class="abs" style="left:267px;top:1219px;width:1620px;height:1px;background:#eef0f3"></div>
<div class="abs" style="left:267px;top:1272px;width:1620px;height:1px;background:#c2c2c2"></div>
<div class="abs" style="left:1560px;top:896px;width:185px;height:377px;background:#bbf7d0"></div>
<div class="abs" style="left:1560px;top:949px;width:185px;height:0;border-top:1px dotted #dcebe2"></div>
<div class="abs" style="left:1560px;top:1003px;width:185px;height:0;border-top:1px dotted #dcebe2"></div>
<div class="abs" style="left:1560px;top:1057px;width:185px;height:0;border-top:1px dotted #dcebe2"></div>
<div class="abs" style="left:1560px;top:1111px;width:185px;height:0;border-top:1px dotted #dcebe2"></div>
<div class="abs" style="left:1560px;top:1165px;width:185px;height:0;border-top:1px dotted #dcebe2"></div>
<div class="abs" style="left:1560px;top:1219px;width:185px;height:0;border-top:1px dotted #dcebe2"></div>
<div class="abs" style="left:1560px;top:1273px;width:185px;height:0;border-top:1px dotted #8f9a93"></div>
<span class="t" style="left:277.70px;top:868px;font-size:13.1px;line-height:15px;font-weight:700;color:#565e6c;letter-spacing:0.462px;">TYPE</span>
<span class="t" style="left:375.70px;top:868px;font-size:13.1px;line-height:15px;font-weight:700;color:#565e6c;letter-spacing:0.810px;">NAME</span>
<span class="t" style="left:735.70px;top:868px;font-size:13.1px;line-height:15px;font-weight:700;color:#565e6c;letter-spacing:0.429px;">REQUESTS/S</span>
<span class="t" style="left:899.30px;top:868px;font-size:13.1px;line-height:15px;font-weight:700;color:#565e6c;letter-spacing:0.316px;">FAILURES/S</span>
<span class="t" style="left:1052.70px;top:868px;font-size:13.1px;line-height:15px;font-weight:700;color:#565e6c;letter-spacing:0.761px;">MEDIAN (MS)</span>
<span class="t" style="left:1209.30px;top:868px;font-size:13.1px;line-height:15px;font-weight:700;color:#565e6c;letter-spacing:0.954px;">P50 (MS)</span>
<span class="t" style="left:1337.00px;top:868px;font-size:13.1px;line-height:15px;font-weight:700;color:#565e6c;letter-spacing:0.954px;">P95 (MS)</span>
<span class="t" style="left:1463.90px;top:868px;font-size:13.1px;line-height:15px;font-weight:700;color:#565e6c;letter-spacing:1.039px;">P99 (MS)</span>
<span class="t" style="left:1603.70px;top:868px;font-size:13.1px;line-height:15px;font-weight:700;color:#565e6c;letter-spacing:0.780px;">MEDIAN VS P95</span>
<svg style="left:0;top:0" width="1920" height="1312" viewBox="0 0 1920 1312"><path d="M340.30 874.2 L343.70 867.8 L347.10 874.2Z" fill="#9aa0a8"/><path d="M340.30 877.6 L343.70 884 L347.10 877.6Z" fill="#d9dbdf"/><path d="M667.30 874.2 L670.70 867.8 L674.10 874.2Z" fill="#d9dbdf"/><path d="M667.30 877.6 L670.70 884 L674.10 877.6Z" fill="#d9dbdf"/><path d="M832.30 874.2 L835.70 867.8 L839.10 874.2Z" fill="#d9dbdf"/><path d="M832.30 877.6 L835.70 884 L839.10 877.6Z" fill="#d9dbdf"/><path d="M987.90 874.2 L991.30 867.8 L994.70 874.2Z" fill="#d9dbdf"/><path d="M987.90 877.6 L991.30 884 L994.70 877.6Z" fill="#d9dbdf"/><path d="M1152.60 874.2 L1156.00 867.8 L1159.40 874.2Z" fill="#d9dbdf"/><path d="M1152.60 877.6 L1156.00 884 L1159.40 877.6Z" fill="#d9dbdf"/><path d="M1279.90 874.2 L1283.30 867.8 L1286.70 874.2Z" fill="#d9dbdf"/><path d="M1279.90 877.6 L1283.30 884 L1286.70 877.6Z" fill="#d9dbdf"/><path d="M1407.60 874.2 L1411.00 867.8 L1414.40 874.2Z" fill="#d9dbdf"/><path d="M1407.60 877.6 L1411.00 884 L1414.40 877.6Z" fill="#d9dbdf"/><path d="M1535.00 874.2 L1538.40 867.8 L1541.80 874.2Z" fill="#d9dbdf"/><path d="M1535.00 877.6 L1538.40 884 L1541.80 877.6Z" fill="#d9dbdf"/><path d="M1721.10 874.2 L1724.50 867.8 L1727.90 874.2Z" fill="#d9dbdf"/><path d="M1721.10 877.6 L1724.50 884 L1727.90 877.6Z" fill="#d9dbdf"/><path d="M1861.90 874.2 L1865.30 867.8 L1868.70 874.2Z" fill="#d9dbdf"/><path d="M1861.90 877.6 L1865.30 884 L1868.70 877.6Z" fill="#d9dbdf"/></svg>
<span class="t" style="left:277.30px;top:915px;font-size:13.8px;line-height:15px;font-weight:700;color:#111827;transform:scaleX(0.8883);transform-origin:0 0;">GET</span>
<span class="t" style="left:375.50px;top:915px;font-size:13.8px;line-height:15px;font-weight:400;color:#6b7280;letter-spacing:0.092px;">Page: api-reference-introducti...</span>
<span class="t" style="left:822.84px;top:915px;font-size:13.8px;line-height:15px;font-weight:400;color:#6b7280;transform:scaleX(0.8511);transform-origin:0 0;">1.81</span>
<span class="t" style="left:974.44px;top:915px;font-size:13.8px;line-height:15px;font-weight:400;color:#6b7280;">0.00</span>
<span class="t" style="left:1150.65px;top:915px;font-size:13.8px;line-height:15px;font-weight:400;color:#6b7280;">36</span>
<span class="t" style="left:1277.95px;top:915px;font-size:13.8px;line-height:15px;font-weight:400;color:#6b7280;">36</span>
<span class="t" style="left:1405.35px;top:915px;font-size:13.8px;line-height:15px;font-weight:400;color:#6b7280;">76</span>
<span class="t" style="left:1527.38px;top:915px;font-size:13.8px;line-height:15px;font-weight:400;color:#6b7280;transform:scaleX(0.9131);transform-origin:0 0;">190</span>
<span class="t" style="left:1703.43px;top:915px;font-size:13.8px;line-height:15px;font-weight:400;color:#6b7280;transform:scaleX(0.8833);transform-origin:0 0;">211%</span>
<div class="abs" style="left:1780px;top:904px;width:96px;height:36px;border:1px solid #d7dae0;border-radius:8px;background:#fff"></div>
<span class="t" style="left:1794.10px;top:914px;font-size:13.3px;line-height:15px;font-weight:400;color:#1f2937;letter-spacing:0.268px;-webkit-text-stroke:0.25px #1f2937;">Analysis</span>
<span class="t" style="left:1846.40px;top:911px;font-size:16px;line-height:17px;font-weight:400;color:#6366f1;transform:scaleX(1.2);transform-origin:0 0;">→</span>
<span class="t" style="left:277.30px;top:969px;font-size:13.8px;line-height:15px;font-weight:700;color:#111827;transform:scaleX(0.8883);transform-origin:0 0;">GET</span>
<span class="t" style="left:375.50px;top:969px;font-size:13.8px;line-height:15px;font-weight:400;color:#6b7280;transform:scaleX(0.9709);transform-origin:0 0;">Page: home</span>
<span class="t" style="left:820.84px;top:969px;font-size:13.8px;line-height:15px;font-weight:400;color:#6b7280;transform:scaleX(0.9255);transform-origin:0 0;">1.98</span>
<span class="t" style="left:974.44px;top:969px;font-size:13.8px;line-height:15px;font-weight:400;color:#6b7280;">0.00</span>
<span class="t" style="left:1150.65px;top:969px;font-size:13.8px;line-height:15px;font-weight:400;color:#6b7280;">69</span>
<span class="t" style="left:1277.95px;top:969px;font-size:13.8px;line-height:15px;font-weight:400;color:#6b7280;">69</span>
<span class="t" style="left:1399.68px;top:969px;font-size:13.8px;line-height:15px;font-weight:400;color:#6b7280;transform:scaleX(0.9131);transform-origin:0 0;">140</span>
<span class="t" style="left:1525.38px;top:969px;font-size:13.8px;line-height:15px;font-weight:400;color:#6b7280;">270</span>
<span class="t" style="left:1698.40px;top:969px;font-size:13.8px;line-height:15px;font-weight:400;color:#6b7280;">203%</span>
<div class="abs" style="left:1780px;top:958px;width:96px;height:36px;border:1px solid #d7dae0;border-radius:8px;background:#fff"></div>
<span class="t" style="left:1794.10px;top:968px;font-size:13.3px;line-height:15px;font-weight:400;color:#1f2937;letter-spacing:0.268px;-webkit-text-stroke:0.25px #1f2937;">Analysis</span>
<span class="t" style="left:1846.40px;top:965px;font-size:16px;line-height:17px;font-weight:400;color:#6366f1;transform:scaleX(1.2);transform-origin:0 0;">→</span>
<span class="t" style="left:277.30px;top:1023px;font-size:13.8px;line-height:15px;font-weight:700;color:#111827;transform:scaleX(0.8883);transform-origin:0 0;">GET</span>
<span class="t" style="left:375.50px;top:1023px;font-size:13.8px;line-height:15px;font-weight:400;color:#6b7280;transform:scaleX(0.9776);transform-origin:0 0;">Page: hosts</span>
<span class="t" style="left:820.84px;top:1023px;font-size:13.8px;line-height:15px;font-weight:400;color:#6b7280;transform:scaleX(0.9255);transform-origin:0 0;">1.90</span>
<span class="t" style="left:974.44px;top:1023px;font-size:13.8px;line-height:15px;font-weight:400;color:#6b7280;">0.00</span>
<span class="t" style="left:1150.65px;top:1023px;font-size:13.8px;line-height:15px;font-weight:400;color:#6b7280;">36</span>
<span class="t" style="left:1277.95px;top:1023px;font-size:13.8px;line-height:15px;font-weight:400;color:#6b7280;">36</span>
<span class="t" style="left:1405.35px;top:1023px;font-size:13.8px;line-height:15px;font-weight:400;color:#6b7280;">90</span>
<span class="t" style="left:1527.38px;top:1023px;font-size:13.8px;line-height:15px;font-weight:400;color:#6b7280;transform:scaleX(0.9131);transform-origin:0 0;">190</span>
<span class="t" style="left:1698.40px;top:1023px;font-size:13.8px;line-height:15px;font-weight:400;color:#6b7280;">250%</span>
<div class="abs" style="left:1780px;top:1012px;width:96px;height:36px;border:1px solid #d7dae0;border-radius:8px;background:#fff"></div>
<span class="t" style="left:1794.10px;top:1022px;font-size:13.3px;line-height:15px;font-weight:400;color:#1f2937;letter-spacing:0.268px;-webkit-text-stroke:0.25px #1f2937;">Analysis</span>
<span class="t" style="left:1846.40px;top:1019px;font-size:16px;line-height:17px;font-weight:400;color:#6366f1;transform:scaleX(1.2);transform-origin:0 0;">→</span>
<span class="t" style="left:277.30px;top:1077px;font-size:13.8px;line-height:15px;font-weight:700;color:#111827;transform:scaleX(0.8883);transform-origin:0 0;">GET</span>
<span class="t" style="left:375.50px;top:1077px;font-size:13.8px;line-height:15px;font-weight:400;color:#6b7280;">Page: introduction</span>
<span class="t" style="left:820.84px;top:1077px;font-size:13.8px;line-height:15px;font-weight:400;color:#6b7280;transform:scaleX(0.9255);transform-origin:0 0;">1.84</span>
<span class="t" style="left:974.44px;top:1077px;font-size:13.8px;line-height:15px;font-weight:400;color:#6b7280;">0.00</span>
<span class="t" style="left:1150.65px;top:1077px;font-size:13.8px;line-height:15px;font-weight:400;color:#6b7280;">35</span>
<span class="t" style="left:1277.95px;top:1077px;font-size:13.8px;line-height:15px;font-weight:400;color:#6b7280;">35</span>
<span class="t" style="left:1405.35px;top:1077px;font-size:13.8px;line-height:15px;font-weight:400;color:#6b7280;">77</span>
<span class="t" style="left:1525.38px;top:1077px;font-size:13.8px;line-height:15px;font-weight:400;color:#6b7280;">200</span>
<span class="t" style="left:1698.40px;top:1077px;font-size:13.8px;line-height:15px;font-weight:400;color:#6b7280;">220%</span>
<div class="abs" style="left:1780px;top:1066px;width:96px;height:36px;border:1px solid #d7dae0;border-radius:8px;background:#fff"></div>
<span class="t" style="left:1794.10px;top:1076px;font-size:13.3px;line-height:15px;font-weight:400;color:#1f2937;letter-spacing:0.268px;-webkit-text-stroke:0.25px #1f2937;">Analysis</span>
<span class="t" style="left:1846.40px;top:1073px;font-size:16px;line-height:17px;font-weight:400;color:#6366f1;transform:scaleX(1.2);transform-origin:0 0;">→</span>
<span class="t" style="left:277.30px;top:1131px;font-size:13.8px;line-height:15px;font-weight:700;color:#111827;transform:scaleX(0.8883);transform-origin:0 0;">GET</span>
<span class="t" style="left:375.50px;top:1131px;font-size:13.8px;line-height:15px;font-weight:400;color:#6b7280;letter-spacing:0.003px;">Page: quickstart</span>
<span class="t" style="left:820.84px;top:1131px;font-size:13.8px;line-height:15px;font-weight:400;color:#6b7280;transform:scaleX(0.9255);transform-origin:0 0;">1.95</span>
<span class="t" style="left:974.44px;top:1131px;font-size:13.8px;line-height:15px;font-weight:400;color:#6b7280;">0.00</span>
<span class="t" style="left:1150.65px;top:1131px;font-size:13.8px;line-height:15px;font-weight:400;color:#6b7280;">36</span>
<span class="t" style="left:1277.95px;top:1131px;font-size:13.8px;line-height:15px;font-weight:400;color:#6b7280;">36</span>
<span class="t" style="left:1405.35px;top:1131px;font-size:13.8px;line-height:15px;font-weight:400;color:#6b7280;">82</span>
<span class="t" style="left:1525.38px;top:1131px;font-size:13.8px;line-height:15px;font-weight:400;color:#6b7280;">200</span>
<span class="t" style="left:1698.40px;top:1131px;font-size:13.8px;line-height:15px;font-weight:400;color:#6b7280;">228%</span>
<div class="abs" style="left:1780px;top:1120px;width:96px;height:36px;border:1px solid #d7dae0;border-radius:8px;background:#fff"></div>
<span class="t" style="left:1794.10px;top:1130px;font-size:13.3px;line-height:15px;font-weight:400;color:#1f2937;letter-spacing:0.268px;-webkit-text-stroke:0.25px #1f2937;">Analysis</span>
<span class="t" style="left:1846.40px;top:1127px;font-size:16px;line-height:17px;font-weight:400;color:#6366f1;transform:scaleX(1.2);transform-origin:0 0;">→</span>
<span class="t" style="left:277.30px;top:1185px;font-size:13.8px;line-height:15px;font-weight:700;color:#111827;transform:scaleX(0.8883);transform-origin:0 0;">GET</span>
<span class="t" style="left:375.50px;top:1185px;font-size:13.8px;line-height:15px;font-weight:400;color:#6b7280;letter-spacing:0.030px;">Page: simulating-real-users</span>
<span class="t" style="left:820.84px;top:1185px;font-size:13.8px;line-height:15px;font-weight:400;color:#6b7280;transform:scaleX(0.9255);transform-origin:0 0;">1.94</span>
<span class="t" style="left:974.44px;top:1185px;font-size:13.8px;line-height:15px;font-weight:400;color:#6b7280;">0.00</span>
<span class="t" style="left:1150.65px;top:1185px;font-size:13.8px;line-height:15px;font-weight:400;color:#6b7280;">36</span>
<span class="t" style="left:1277.95px;top:1185px;font-size:13.8px;line-height:15px;font-weight:400;color:#6b7280;">36</span>
<span class="t" style="left:1405.35px;top:1185px;font-size:13.8px;line-height:15px;font-weight:400;color:#6b7280;">85</span>
<span class="t" style="left:1525.38px;top:1185px;font-size:13.8px;line-height:15px;font-weight:400;color:#6b7280;">200</span>
<span class="t" style="left:1698.40px;top:1185px;font-size:13.8px;line-height:15px;font-weight:400;color:#6b7280;">236%</span>
<div class="abs" style="left:1780px;top:1174px;width:96px;height:36px;border:1px solid #d7dae0;border-radius:8px;background:#fff"></div>
<span class="t" style="left:1794.10px;top:1184px;font-size:13.3px;line-height:15px;font-weight:400;color:#1f2937;letter-spacing:0.268px;-webkit-text-stroke:0.25px #1f2937;">Analysis</span>
<span class="t" style="left:1846.40px;top:1181px;font-size:16px;line-height:17px;font-weight:400;color:#6366f1;transform:scaleX(1.2);transform-origin:0 0;">→</span>
<span class="t" style="left:277.30px;top:1239px;font-size:13.8px;line-height:15px;font-weight:700;color:#111827;transform:scaleX(0.8883);transform-origin:0 0;">GET</span>
<span class="t" style="left:375.50px;top:1239px;font-size:13.8px;line-height:15px;font-weight:400;color:#6b7280;letter-spacing:0.064px;">Page: understanding-load-testi...</span>
<span class="t" style="left:820.84px;top:1239px;font-size:13.8px;line-height:15px;font-weight:400;color:#6b7280;transform:scaleX(0.9255);transform-origin:0 0;">1.92</span>
<span class="t" style="left:974.44px;top:1239px;font-size:13.8px;line-height:15px;font-weight:400;color:#6b7280;">0.00</span>
<span class="t" style="left:1150.65px;top:1239px;font-size:13.8px;line-height:15px;font-weight:400;color:#6b7280;">35</span>
<span class="t" style="left:1277.95px;top:1239px;font-size:13.8px;line-height:15px;font-weight:400;color:#6b7280;">36</span>
<span class="t" style="left:1405.35px;top:1239px;font-size:13.8px;line-height:15px;font-weight:400;color:#6b7280;">73</span>
<span class="t" style="left:1527.38px;top:1239px;font-size:13.8px;line-height:15px;font-weight:400;color:#6b7280;transform:scaleX(0.9131);transform-origin:0 0;">150</span>
<span class="t" style="left:1698.40px;top:1239px;font-size:13.8px;line-height:15px;font-weight:400;color:#6b7280;">209%</span>
<div class="abs" style="left:1780px;top:1228px;width:96px;height:36px;border:1px solid #d7dae0;border-radius:8px;background:#fff"></div>
<span class="t" style="left:1794.10px;top:1238px;font-size:13.3px;line-height:15px;font-weight:400;color:#1f2937;letter-spacing:0.268px;-webkit-text-stroke:0.25px #1f2937;">Analysis</span>
<span class="t" style="left:1846.40px;top:1235px;font-size:16px;line-height:17px;font-weight:400;color:#6366f1;transform:scaleX(1.2);transform-origin:0 0;">→</span>
<div class="abs" style="left:1858px;top:1250px;width:51.2px;height:51.6px;border-radius:50%;background:#030712;box-shadow:0 0 0 1.2px rgba(255,255,255,.85)"></div>
<svg style="left:0;top:0" width="1920" height="1312" viewBox="0 0 1920 1312"><path d="M1872.4 1265.7H1894.2V1287.3L1889.8 1283.1H1872.4Z" fill="#fff"/></svg>
</div>
</body>
</html>
